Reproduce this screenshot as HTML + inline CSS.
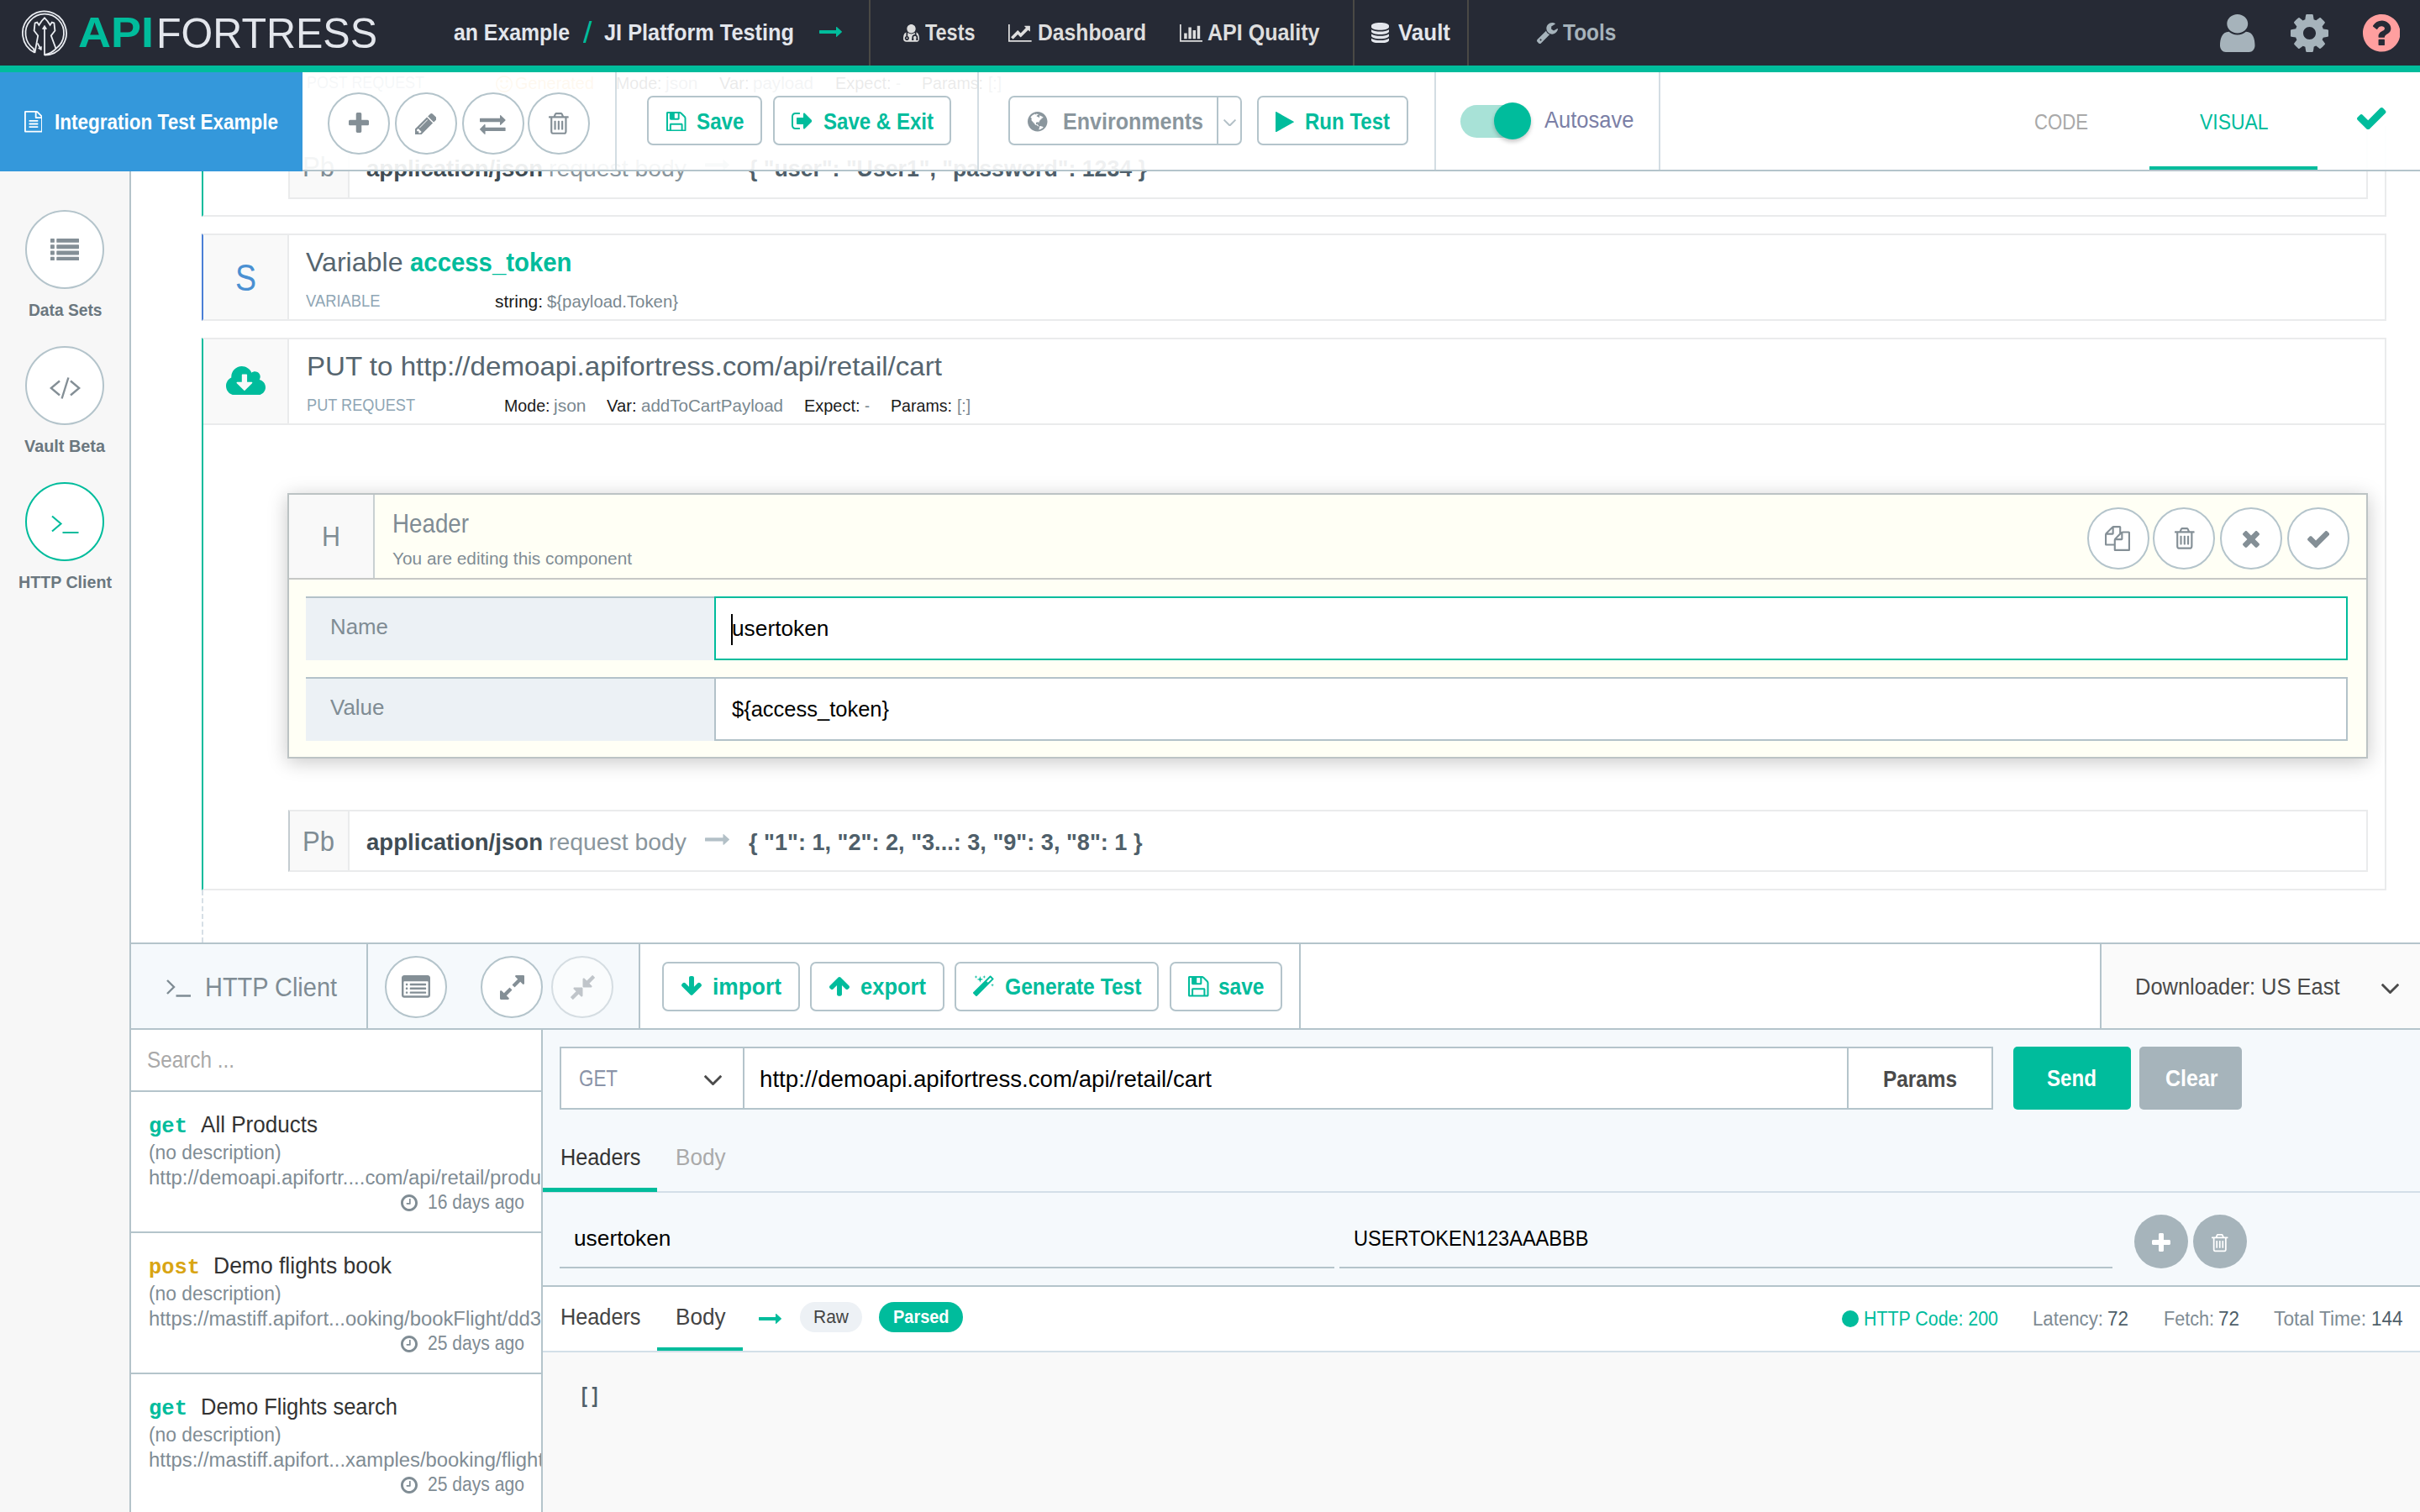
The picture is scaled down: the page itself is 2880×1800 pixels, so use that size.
<!DOCTYPE html>
<html lang="en"><head><meta charset="utf-8"><title>API Fortress - Integration Test Example</title>
<style>
*{box-sizing:border-box;margin:0;padding:0}
html,body{width:2880px;height:1800px;overflow:hidden;background:#fff}
body{position:relative;font-family:"Liberation Sans",sans-serif;-webkit-font-smoothing:antialiased}
.b{position:absolute;display:block}
.t{position:absolute;display:block;white-space:pre;transform-origin:0 0}
</style></head>
<body>
<main id="editor" class="b" style="left:156px;top:86px;width:2724px;height:1036px;background:#fff;overflow:hidden">
<span class="t" id="t0" style="left:208.5px;top:2.15px;font-size:20.5px;line-height:20.5px;color:#8fa6b5;transform:scaleX(0.8736);">POST REQUEST</span>
<svg class="b" style="left:434px;top:4px;" width="20" height="20" viewBox="0 -1408 1536 1536" preserveAspectRatio="none"><path fill="#f3b95f" transform="scale(1 -1)" d="M1134 461C1145 495 1126 530 1093 541C1059 552 1023 533 1012 499C979 392 880 320 768 320C656 320 557 392 524 499C513 533 477 552 444 541C410 530 391 495 402 461C452 300 599 192 768 192C937 192 1084 300 1134 461ZM640 896C640 967 583 1024 512 1024C441 1024 384 967 384 896C384 825 441 768 512 768C583 768 640 825 640 896ZM1152 896C1152 967 1095 1024 1024 1024C953 1024 896 967 896 896C896 825 953 768 1024 768C1095 768 1152 825 1152 896ZM1408 640C1408 287 1121 0 768 0C415 0 128 287 128 640C128 993 415 1280 768 1280C1121 1280 1408 993 1408 640ZM1536 640C1536 1064 1192 1408 768 1408C344 1408 0 1064 0 640C0 216 344 -128 768 -128C1192 -128 1536 216 1536 640Z"/></svg>
<span class="t" id="t1" style="left:457px;top:1.72px;font-size:21px;line-height:21px;color:#f0ad4e;transform:scaleX(0.9471);">Generated</span>
<span class="t" id="t2" style="left:576.5px;top:1.72px;font-size:21px;line-height:21px;color:#1a1a1a;transform:scaleX(0.9336);">Mode:</span>
<span class="t" id="t3" style="left:635.5px;top:1.72px;font-size:21px;line-height:21px;color:#7a8890;transform:scaleX(0.9992);">json</span>
<span class="t" id="t4" style="left:700px;top:1.72px;font-size:21px;line-height:21px;color:#1a1a1a;transform:scaleX(0.9603);">Var:</span>
<span class="t" id="t5" style="left:740px;top:1.72px;font-size:21px;line-height:21px;color:#7a8890;transform:scaleX(0.9788);">payload</span>
<span class="t" id="t6" style="left:838px;top:1.72px;font-size:21px;line-height:21px;color:#1a1a1a;transform:scaleX(0.9494);">Expect:</span>
<span class="t" id="t7" style="left:910px;top:1.72px;font-size:21px;line-height:21px;color:#7a8890;transform:scaleX(0.8571);">-</span>
<span class="t" id="t8" style="left:941px;top:1.72px;font-size:21px;line-height:21px;color:#1a1a1a;transform:scaleX(0.9337);">Params:</span>
<span class="t" id="t9" style="left:1020px;top:1.72px;font-size:21px;line-height:21px;color:#7a8890;transform:scaleX(0.9135);">[:]</span>
<div class="b" style="left:84px;top:64px;width:2600px;height:107.5px;border:2px solid #eaebec;border-left:2px solid #00bc9c;border-top:0"></div>
<div class="b" style="left:187px;top:64px;width:2475px;height:86.5px;border:2px solid #eaebec;border-top:0"></div>
<div class="b" style="left:189px;top:64px;width:70.5px;height:84.5px;background:#f9f9f9;border-right:2px solid #eaebec"></div>
<span class="t" id="t10" style="left:204px;top:95.02px;font-size:34px;line-height:34px;color:#7f8c94;transform:scaleX(0.9136);">Pb</span>
<span class="t" id="t11" style="left:280px;top:99.67px;font-size:28.5px;line-height:28.5px;font-weight:700;color:#3f4c54;transform:scaleX(0.9680);">application/json</span>
<span class="t" id="t12" style="left:497px;top:99.67px;font-size:28.5px;line-height:28.5px;color:#8a969d;transform:scaleX(0.9953);">request body</span>
<svg class="b" style="left:683px;top:104.3px;" width="29" height="12.88" viewBox="0 -1023.73 1728 767.405" preserveAspectRatio="none"><path fill="#b3c0c7" transform="scale(1 -1)" d="M1728 643C1728 643 1728 643 1728 643C1728 652 1724 660 1718 666L1334 1016C1324 1024 1311 1026 1299 1021C1287 1016 1280 1005 1280 992V768H32C14 768 0 754 0 736V544C0 526 14 512 32 512H1280V288C1280 275 1288 264 1299 259C1311 254 1324 256 1334 265L1718 619C1724 625 1728 634 1728 643Z"/></svg>
<span class="t" id="t13" style="left:735px;top:99.67px;font-size:28.5px;line-height:28.5px;font-weight:700;color:#4f5f6a;transform:scaleX(0.9375);">{ "user": "User1", "password": 1234 }</span>
<div class="b" style="left:84px;top:192px;width:2600px;height:104px;border:2px solid #eaebec;border-left:2px solid #4a7fd6;background:#fff"></div>
<div class="b" style="left:86px;top:194px;width:102px;height:100px;background:#f9f9f9;border-right:2px solid #eaebec"></div>
<span class="t" id="t14" style="left:123.5px;top:221.91px;font-size:45px;line-height:45px;color:#4a90d2;transform:scaleX(0.8329);">S</span>
<span class="t" id="t15" style="left:207.5px;top:210.68px;font-size:30.5px;line-height:30.5px;color:#56656f;transform:scaleX(1.0534);">Variable</span>
<span class="t" id="t16" style="left:331.5px;top:210.68px;font-size:30.5px;line-height:30.5px;font-weight:700;color:#00bc9c;transform:scaleX(0.9620);">access_token</span>
<span class="t" id="t17" style="left:207.5px;top:262.35px;font-size:20.5px;line-height:20.5px;color:#8fa6b5;transform:scaleX(0.8962);">VARIABLE</span>
<span class="t" id="t18" style="left:432.5px;top:262.22px;font-size:21px;line-height:21px;color:#1a1a1a;transform:scaleX(0.9967);">string:</span>
<span class="t" id="t19" style="left:495px;top:262.22px;font-size:21px;line-height:21px;color:#7a8890;transform:scaleX(0.9681);">${payload.Token}</span>
<div class="b" style="left:84px;top:316px;width:2600px;height:658px;border:2px solid #eaebec;border-left:2px solid #00bc9c"></div>
<div class="b" style="left:86px;top:318px;width:102px;height:101px;background:#f9f9f9;border-right:2px solid #eaebec"></div>
<div class="b" style="left:86px;top:418px;width:2596px;height:2px;background:#eaebec"></div>
<svg class="b" style="left:112.5px;top:350px;" width="47" height="34.47" viewBox="0 -1408 1920 1408" preserveAspectRatio="none"><path fill="#00bc9c" transform="scale(1 -1)" d="M1280 608C1280 599 1276 591 1270 584L919 233C913 227 904 224 896 224C887 224 879 227 873 233L521 585C515 591 512 600 512 608C512 625 526 640 544 640H768V992C768 1009 783 1024 800 1024H992C1009 1024 1024 1009 1024 992V640H1248C1266 640 1280 626 1280 608ZM1920 384C1920 562 1797 717 1623 758C1650 799 1664 847 1664 896C1664 1037 1549 1152 1408 1152C1347 1152 1288 1130 1242 1090C1163 1282 976 1408 768 1408C485 1408 256 1179 256 896C256 882 257 868 258 853C101 780 0 622 0 448C0 201 201 0 448 0H1536C1748 0 1920 172 1920 384Z"/></svg>
<span class="t" id="t20" style="left:209px;top:335.18px;font-size:30.5px;line-height:30.5px;color:#56656f;transform:scaleX(1.0860);">PUT to http://demoapi.apifortress.com/api/retail/cart</span>
<span class="t" id="t21" style="left:209px;top:386.45px;font-size:20.5px;line-height:20.5px;color:#8fa6b5;transform:scaleX(0.8871);">PUT REQUEST</span>
<span class="t" id="t22" style="left:443.5px;top:386.22px;font-size:21px;line-height:21px;color:#1a1a1a;transform:scaleX(0.9336);">Mode:</span>
<span class="t" id="t23" style="left:502.5px;top:386.22px;font-size:21px;line-height:21px;color:#7a8890;transform:scaleX(0.9992);">json</span>
<span class="t" id="t24" style="left:566px;top:386.22px;font-size:21px;line-height:21px;color:#1a1a1a;transform:scaleX(0.9603);">Var:</span>
<span class="t" id="t25" style="left:606.5px;top:386.22px;font-size:21px;line-height:21px;color:#7a8890;transform:scaleX(0.9781);">addToCartPayload</span>
<span class="t" id="t26" style="left:801px;top:386.22px;font-size:21px;line-height:21px;color:#1a1a1a;transform:scaleX(0.9494);">Expect:</span>
<span class="t" id="t27" style="left:873px;top:386.22px;font-size:21px;line-height:21px;color:#7a8890;transform:scaleX(0.8571);">-</span>
<span class="t" id="t28" style="left:904px;top:386.22px;font-size:21px;line-height:21px;color:#1a1a1a;transform:scaleX(0.9337);">Params:</span>
<span class="t" id="t29" style="left:983px;top:386.22px;font-size:21px;line-height:21px;color:#7a8890;transform:scaleX(0.9135);">[:]</span>
<div class="b" style="left:84px;top:974px;width:2px;height:62px;border-left:2px dashed #d6dfe6"></div>
<div class="b" style="left:186.3px;top:500.5px;width:2475.7px;height:316.5px;background:#fffff5;border:2px solid #bcc3c4;box-shadow:0 4px 22px rgba(0,0,0,.22)"></div>
<div class="b" style="left:188.3px;top:502.5px;width:101.7px;height:100.5px;background:#f9f9f9;border-right:2px solid #c9d0d2"></div>
<div class="b" style="left:188.3px;top:602px;width:2471.7px;height:2px;background:#c6c8c6"></div>
<span class="t" id="t30" style="left:226.5px;top:535.22px;font-size:34px;line-height:34px;color:#7f8c94;transform:scaleX(0.8957);">H</span>
<span class="t" id="t31" style="left:310.5px;top:522.18px;font-size:30.5px;line-height:30.5px;color:#7f8c94;transform:scaleX(0.9096);">Header</span>
<span class="t" id="t32" style="left:310.5px;top:568.65px;font-size:20.5px;line-height:20.5px;color:#7f8c94;transform:scaleX(1.0151);">You are editing this component</span>
<div class="b" style="left:2328px;top:518px;width:74px;height:74px;border-radius:50%;border:2px solid #b4c4cb;background:#fff;"></div>
<svg class="b" style="left:2349px;top:540.1px;" width="30" height="30" viewBox="0 -1536 1792 1792" preserveAspectRatio="none"><path fill="#848f96" transform="scale(1 -1)" d="M1696 1152H1280C1241 1152 1191 1135 1152 1112V1440C1152 1493 1109 1536 1056 1536H640C587 1536 513 1505 476 1468L68 1060C31 1023 0 949 0 896V224C0 171 43 128 96 128H640V-160C640 -213 683 -256 736 -256H1696C1749 -256 1792 -213 1792 -160V1056C1792 1109 1749 1152 1696 1152ZM1152 939V640H853ZM512 1323V1024H213ZM708 676C671 639 640 565 640 512V256H128V896H544C597 896 640 939 640 992V1408H1024V992ZM1664 -128H768V512H1184C1237 512 1280 555 1280 608V1024H1664Z"/></svg>
<div class="b" style="left:2406px;top:518px;width:74px;height:74px;border-radius:50%;border:2px solid #b4c4cb;background:#fff;"></div>
<svg class="b" style="left:2432px;top:542.33px;" width="23.6" height="25.75" viewBox="0 -1408 1408 1536" preserveAspectRatio="none"><path fill="#848f96" transform="scale(1 -1)" d="M512 800C512 818 498 832 480 832H416C398 832 384 818 384 800V224C384 206 398 192 416 192H480C498 192 512 206 512 224ZM768 800C768 818 754 832 736 832H672C654 832 640 818 640 800V224C640 206 654 192 672 192H736C754 192 768 206 768 224ZM1024 800C1024 818 1010 832 992 832H928C910 832 896 818 896 800V224C896 206 910 192 928 192H992C1010 192 1024 206 1024 224ZM1152 76C1152 28 1125 0 1120 0H288C283 0 256 28 256 76V1024H1152V76ZM480 1152 529 1269C532 1273 540 1279 546 1280H863C868 1279 877 1273 880 1269L928 1152ZM1408 1120C1408 1138 1394 1152 1376 1152H1067L997 1319C977 1368 917 1408 864 1408H544C491 1408 431 1368 411 1319L341 1152H32C14 1152 0 1138 0 1120V1056C0 1038 14 1024 32 1024H128V72C128 -38 200 -128 288 -128H1120C1208 -128 1280 -34 1280 76V1024H1376C1394 1024 1408 1038 1408 1056Z"/></svg>
<div class="b" style="left:2486px;top:518px;width:74px;height:74px;border-radius:50%;border:2px solid #b4c4cb;background:#fff;"></div>
<svg class="b" style="left:2513.2px;top:546.2px;" width="20" height="20" viewBox="110 -1170 1188 1188" preserveAspectRatio="none"><path fill="#848f96" transform="scale(1 -1)" d="M1298 214C1298 239 1288 264 1270 282L976 576L1270 870C1288 888 1298 913 1298 938C1298 963 1288 988 1270 1006L1134 1142C1116 1160 1091 1170 1066 1170C1041 1170 1016 1160 998 1142L704 848L410 1142C392 1160 367 1170 342 1170C317 1170 292 1160 274 1142L138 1006C120 988 110 963 110 938C110 913 120 888 138 870L432 576L138 282C120 264 110 239 110 214C110 189 120 164 138 146L274 10C292 -8 317 -18 342 -18C367 -18 392 -8 410 10L704 304L998 10C1016 -8 1041 -18 1066 -18C1091 -18 1116 -8 1134 10L1270 146C1288 164 1298 189 1298 214Z"/></svg>
<div class="b" style="left:2566px;top:518px;width:74px;height:74px;border-radius:50%;border:2px solid #b4c4cb;background:#fff;"></div>
<svg class="b" style="left:2589.85px;top:545.72px;" width="26.3" height="20.16" viewBox="121 -1202 1550 1188" preserveAspectRatio="none"><path fill="#848f96" transform="scale(1 -1)" d="M1671 970C1671 995 1661 1020 1643 1038L1507 1174C1489 1192 1464 1202 1439 1202C1414 1202 1389 1192 1371 1174L715 517L421 812C403 830 378 840 353 840C328 840 303 830 285 812L149 676C131 658 121 633 121 608C121 583 131 558 149 540L511 178L647 42C665 24 690 14 715 14C740 14 765 24 783 42L919 178L1643 902C1661 920 1671 945 1671 970Z"/></svg>
<div class="b" style="left:208px;top:624px;width:487px;height:75.5px;background:#ecf1f5;border-top:2px solid #b3c2c9"></div>
<span class="t" id="t33" style="left:236.5px;top:646.87px;font-size:26.5px;line-height:26.5px;color:#7f8c94;transform:scaleX(0.9759);">Name</span>
<div class="b" style="left:694.3px;top:624px;width:1944.2px;height:75.5px;background:#fff;border:2.5px solid #00bc9c"></div>
<span class="t" id="t34" style="left:714.5px;top:649.07px;font-size:26.5px;line-height:26.5px;color:#000;transform:scaleX(0.9923);">usertoken</span>
<div class="b" style="left:713.5px;top:645px;width:2px;height:37px;background:#000"></div>
<div class="b" style="left:208px;top:720px;width:487px;height:75.5px;background:#ecf1f5;border-top:2px solid #b3c2c9"></div>
<span class="t" id="t35" style="left:236.5px;top:742.87px;font-size:26.5px;line-height:26.5px;color:#7f8c94;transform:scaleX(0.9801);">Value</span>
<div class="b" style="left:694.3px;top:720px;width:1944.2px;height:75.5px;background:#fff;border:2px solid #b3c2c9"></div>
<span class="t" id="t36" style="left:714.5px;top:745.07px;font-size:26.5px;line-height:26.5px;color:#000;transform:scaleX(0.9615);">${access_token}</span>
<div class="b" style="left:187px;top:878px;width:2475px;height:74px;border:2px solid #eaebec;border-left:2px solid #c4ccd0;background:#fff"></div>
<div class="b" style="left:189px;top:880px;width:70.5px;height:70px;background:#f9f9f9;border-right:2px solid #eaebec"></div>
<span class="t" id="t37" style="left:204px;top:897.72px;font-size:34px;line-height:34px;color:#7f8c94;transform:scaleX(0.9136);">Pb</span>
<span class="t" id="t38" style="left:280px;top:902.37px;font-size:28.5px;line-height:28.5px;font-weight:700;color:#3f4c54;transform:scaleX(0.9680);">application/json</span>
<span class="t" id="t39" style="left:497px;top:902.37px;font-size:28.5px;line-height:28.5px;color:#8a969d;transform:scaleX(0.9953);">request body</span>
<svg class="b" style="left:683px;top:907px;" width="29" height="12.88" viewBox="0 -1023.73 1728 767.405" preserveAspectRatio="none"><path fill="#b3c0c7" transform="scale(1 -1)" d="M1728 643C1728 643 1728 643 1728 643C1728 652 1724 660 1718 666L1334 1016C1324 1024 1311 1026 1299 1021C1287 1016 1280 1005 1280 992V768H32C14 768 0 754 0 736V544C0 526 14 512 32 512H1280V288C1280 275 1288 264 1299 259C1311 254 1324 256 1334 265L1718 619C1724 625 1728 634 1728 643Z"/></svg>
<span class="t" id="t40" style="left:735px;top:902.37px;font-size:28.5px;line-height:28.5px;font-weight:700;color:#4f5f6a;transform:scaleX(0.9517);">{ "1": 1, "2": 2, "3...: 3, "9": 3, "8": 1 }</span>
</main>
<div id="toolbar" class="b" style="left:0px;top:86px;width:2880px;height:118px;background:rgba(255,255,255,.91);border-bottom:2px solid #b4c4cb">
<div class="b" style="left:0px;top:0px;width:360px;height:118px;background:#3498db"></div>
<svg class="b" style="left:28.5px;top:46px;" width="21.86" height="25.5" viewBox="0 -1536 1536 1792" preserveAspectRatio="none"><path fill="#fff" transform="scale(1 -1)" d="M1468 1156 1156 1468C1119 1505 1045 1536 992 1536H96C43 1536 0 1493 0 1440V-160C0 -213 43 -256 96 -256H1440C1493 -256 1536 -213 1536 -160V992C1536 1045 1505 1119 1468 1156ZM1024 1400C1041 1394 1058 1385 1065 1378L1378 1065C1385 1058 1394 1041 1400 1024H1024ZM1408 -128H128V1408H896V992C896 939 939 896 992 896H1408ZM384 736V672C384 654 398 640 416 640H1120C1138 640 1152 654 1152 672V736C1152 754 1138 768 1120 768H416C398 768 384 754 384 736ZM1120 512H416C398 512 384 498 384 480V416C384 398 398 384 416 384H1120C1138 384 1152 398 1152 416V480C1152 498 1138 512 1120 512ZM1120 256H416C398 256 384 242 384 224V160C384 142 398 128 416 128H1120C1138 128 1152 142 1152 160V224C1152 242 1138 256 1120 256Z"/></svg>
<span class="t" id="t41" style="left:65px;top:46.07px;font-size:26.5px;line-height:26.5px;font-weight:700;color:#fff;transform:scaleX(0.8494);">Integration Test Example</span>
<div class="b" style="left:390px;top:24px;width:74px;height:74px;border-radius:50%;border:2px solid #b4c4cb;background:#fff;"></div>
<svg class="b" style="left:415px;top:48.2px;" width="24" height="24" viewBox="0 -1408 1408 1408" preserveAspectRatio="none"><path fill="#848f96" transform="scale(1 -1)" d="M1408 800C1408 853 1365 896 1312 896H896V1312C896 1365 853 1408 800 1408H608C555 1408 512 1365 512 1312V896H96C43 896 0 853 0 800V608C0 555 43 512 96 512H512V96C512 43 555 0 608 0H800C853 0 896 43 896 96V512H1312C1365 512 1408 555 1408 608Z"/></svg>
<div class="b" style="left:469.9px;top:24px;width:74px;height:74px;border-radius:50%;border:2px solid #b4c4cb;background:#fff;"></div>
<svg class="b" style="left:493.7px;top:48.8px;" width="25.6" height="25.6" viewBox="0 -1387 1515 1515" preserveAspectRatio="none"><path fill="#848f96" transform="scale(1 -1)" d="M363 0H256V128H128V235L219 326L454 91ZM886 928C886 922 884 916 879 911L337 369C332 364 326 362 320 362C307 362 298 371 298 384C298 390 300 396 305 401L847 943C852 948 858 950 864 950C877 950 886 941 886 928ZM832 1120 0 288V-128H416L1248 704ZM1515 1024C1515 1058 1501 1091 1478 1115L1243 1349C1219 1373 1186 1387 1152 1387C1118 1387 1085 1373 1062 1349L896 1184L1312 768L1478 934C1501 957 1515 990 1515 1024Z"/></svg>
<div class="b" style="left:549.8px;top:24px;width:74px;height:74px;border-radius:50%;border:2px solid #b4c4cb;background:#fff;"></div>
<svg class="b" style="left:571px;top:50.93px;" width="30.6" height="22.95" viewBox="0 -1248 1792 1344" preserveAspectRatio="none"><path fill="#848f96" transform="scale(1 -1)" d="M1792 352C1792 370 1777 384 1760 384H384V576C384 594 369 608 352 608C344 608 335 605 329 599L9 279C3 273 0 265 0 256C0 248 3 240 9 234L328 -86C335 -92 343 -96 352 -96C370 -96 384 -81 384 -64V128H1760C1777 128 1792 143 1792 160ZM1792 896C1792 904 1789 913 1783 919L1464 1238C1457 1244 1449 1248 1440 1248C1422 1248 1408 1234 1408 1216V1024H32C15 1024 0 1009 0 992V800C0 783 15 768 32 768H1408V576C1408 559 1423 544 1440 544C1448 544 1457 547 1463 553L1783 873C1789 879 1792 888 1792 896Z"/></svg>
<div class="b" style="left:628px;top:24px;width:74px;height:74px;border-radius:50%;border:2px solid #b4c4cb;background:#fff;"></div>
<svg class="b" style="left:653.45px;top:48.27px;" width="23.7" height="25.85" viewBox="0 -1408 1408 1536" preserveAspectRatio="none"><path fill="#848f96" transform="scale(1 -1)" d="M512 800C512 818 498 832 480 832H416C398 832 384 818 384 800V224C384 206 398 192 416 192H480C498 192 512 206 512 224ZM768 800C768 818 754 832 736 832H672C654 832 640 818 640 800V224C640 206 654 192 672 192H736C754 192 768 206 768 224ZM1024 800C1024 818 1010 832 992 832H928C910 832 896 818 896 800V224C896 206 910 192 928 192H992C1010 192 1024 206 1024 224ZM1152 76C1152 28 1125 0 1120 0H288C283 0 256 28 256 76V1024H1152V76ZM480 1152 529 1269C532 1273 540 1279 546 1280H863C868 1279 877 1273 880 1269L928 1152ZM1408 1120C1408 1138 1394 1152 1376 1152H1067L997 1319C977 1368 917 1408 864 1408H544C491 1408 431 1368 411 1319L341 1152H32C14 1152 0 1138 0 1120V1056C0 1038 14 1024 32 1024H128V72C128 -38 200 -128 288 -128H1120C1208 -128 1280 -34 1280 76V1024H1376C1394 1024 1408 1038 1408 1056Z"/></svg>
<div class="b" style="left:732px;top:0px;width:2px;height:116px;background:#d3dde3"></div>
<div class="b" style="left:1163px;top:0px;width:2px;height:116px;background:#d3dde3"></div>
<div class="b" style="left:1706.5px;top:0px;width:2px;height:116px;background:#d3dde3"></div>
<div class="b" style="left:1974px;top:0px;width:2px;height:116px;background:#d3dde3"></div>
<div class="b" style="left:770.3px;top:28px;width:137px;height:59.3px;border:2px solid #b4c4cb;border-radius:7px;background:#fff"></div>
<svg class="b" style="left:793px;top:46.5px;" width="23.5" height="23.5" viewBox="0 -1408 1536 1536" preserveAspectRatio="none"><path fill="#00bc9c" transform="scale(1 -1)" d="M384 0V384H1152V0ZM1280 0V416C1280 469 1237 512 1184 512H352C299 512 256 469 256 416V0H128V1280H256V864C256 811 299 768 352 768H928C981 768 1024 811 1024 864V1280C1044 1280 1083 1264 1097 1250L1378 969C1391 956 1408 915 1408 896V0ZM896 928C896 911 881 896 864 896H672C655 896 640 911 640 928V1248C640 1265 655 1280 672 1280H864C881 1280 896 1265 896 1248V928ZM1536 896C1536 949 1506 1022 1468 1060L1188 1340C1150 1378 1077 1408 1024 1408H96C43 1408 0 1365 0 1312V-32C0 -85 43 -128 96 -128H1440C1493 -128 1536 -85 1536 -32Z"/></svg>
<span class="t" id="t42" style="left:828.5px;top:45.1px;font-size:28px;line-height:28px;font-weight:700;color:#00bc9c;transform:scaleX(0.8638);">Save</span>
<div class="b" style="left:920px;top:28px;width:211.5px;height:59.3px;border:2px solid #b4c4cb;border-radius:7px;background:#fff"></div>
<svg class="b" style="left:941.5px;top:48px;" width="24.5" height="20" viewBox="0 -1280 1568 1280" preserveAspectRatio="none"><path fill="#00bc9c" transform="scale(1 -1)" d="M640 96C640 133 601 128 576 128H288C200 128 128 200 128 288V992C128 1080 200 1152 288 1152H608C653 1152 640 1220 640 1248C640 1265 625 1280 608 1280H288C129 1280 0 1151 0 992V288C0 129 129 0 288 0H608C653 0 640 68 640 96ZM1568 640C1568 657 1561 673 1549 685L1005 1229C993 1241 977 1248 960 1248C925 1248 896 1219 896 1184V896H448C413 896 384 867 384 832V448C384 413 413 384 448 384H896V96C896 61 925 32 960 32C977 32 993 39 1005 51L1549 595C1561 607 1568 623 1568 640Z"/></svg>
<span class="t" id="t43" style="left:979.5px;top:45.1px;font-size:28px;line-height:28px;font-weight:700;color:#00bc9c;transform:scaleX(0.8588);">Save &amp; Exit</span>
<div class="b" style="left:1200px;top:28px;width:277.5px;height:59.3px;border:2px solid #b4c4cb;border-radius:7px;background:#fff"></div>
<div class="b" style="left:1448px;top:30px;width:2px;height:55.3px;background:#b4c4cb"></div>
<svg class="b" style="left:1223px;top:47px;" width="23.5" height="23.5" viewBox="0 -1408 1536 1536" preserveAspectRatio="none"><path fill="#8a969d" transform="scale(1 -1)" d="M768 1408C344 1408 0 1064 0 640C0 216 344 -128 768 -128C1192 -128 1536 216 1536 640C1536 1064 1192 1408 768 1408ZM1042 887C1053 894 1071 903 1085 899C1096 896 1105 892 1092 883C1086 879 1077 883 1070 881C1079 879 1092 875 1088 866C1114 851 1080 833 1063 835C1071 834 1046 819 1046 820C1037 815 1025 815 1018 806C1010 795 1021 776 1006 780C1000 767 977 774 967 760C978 748 956 731 945 746C935 742 940 731 930 725C934 719 935 713 928 709C930 710 942 700 945 699C943 694 939 690 934 690C939 677 928 663 919 655C909 647 886 639 883 637C865 620 853 595 885 588C886 588 886 555 887 554C889 542 894 507 873 520C863 525 857 553 854 564C851 576 850 576 842 588C829 573 827 584 816 591C805 597 789 595 783 601C768 590 757 593 754 610C750 602 758 590 757 587C752 577 743 579 735 585C722 595 694 578 679 585C680 585 684 581 687 579C684 567 677 574 671 570C664 565 658 555 652 550C665 525 651 501 652 474C652 454 665 419 684 408C693 403 723 401 732 405C746 411 744 422 749 434C754 447 760 453 775 454C818 456 785 421 780 403C777 390 776 375 774 363C779 361 784 362 789 362C789 366 792 371 792 374C798 364 818 361 824 373C831 361 845 352 847 338C849 324 862 309 843 309C829 309 845 281 847 276C858 256 876 248 896 258C896 250 893 228 882 226C872 224 853 245 857 256C856 252 853 249 850 247C840 259 823 265 814 277C812 280 785 321 791 323C777 317 749 327 736 334C715 345 712 374 686 370C668 367 663 360 642 368C628 373 616 383 602 390C586 399 558 408 552 428C546 444 548 463 539 478C533 488 515 508 502 508C514 508 491 538 488 541C477 554 437 589 445 609C447 612 425 620 421 621C425 611 426 600 431 591C436 581 442 572 448 562C459 544 474 522 472 500C459 496 463 515 459 523C452 536 433 536 428 550C430 551 431 551 433 552C434 569 409 583 413 595C399 606 399 627 389 641C380 654 365 660 352 669C347 672 311 718 324 721C304 716 294 763 297 775C297 775 295 775 295 776C299 788 292 850 308 851C297 850 294 877 297 882C299 886 314 871 315 869C321 872 327 880 325 887C322 895 311 902 304 908C301 910 261 936 260 935C264 942 263 949 257 954C238 939 248 968 238 971C234 972 230 975 226 979C284 1071 365 1148 461 1201C467 1202 475 1202 483 1202C501 1200 511 1185 524 1176C526 1181 522 1189 519 1194C522 1202 534 1204 541 1206C550 1207 563 1209 571 1205C565 1214 558 1222 551 1230C550 1229 547 1227 546 1225C535 1234 514 1222 504 1218C496 1214 489 1209 481 1206C476 1204 473 1204 469 1205C499 1221 530 1235 563 1246C569 1242 575 1235 584 1228C578 1233 578 1210 580 1206C591 1191 615 1201 630 1201C629 1201 674 1195 665 1206C672 1196 672 1181 681 1172C690 1181 677 1191 683 1200C685 1204 703 1209 709 1212C716 1217 704 1224 701 1226C691 1232 652 1235 671 1258C678 1266 703 1262 711 1257C722 1251 734 1240 719 1230C726 1229 759 1220 754 1207C757 1213 762 1222 770 1222C779 1221 781 1200 785 1195C799 1170 823 1220 827 1218C809 1225 843 1234 852 1231C859 1228 870 1204 857 1205C868 1195 869 1173 849 1174C835 1175 819 1194 806 1179C797 1169 793 1154 784 1145C770 1131 751 1132 734 1134C741 1133 719 1110 717 1106C711 1099 707 1091 705 1083C703 1073 705 1062 700 1052C717 1057 726 1026 719 1025C740 1028 757 1028 777 1021C791 1016 812 1010 818 995C822 1001 841 998 847 996C859 990 860 977 863 966C867 951 880 926 897 934C900 936 922 946 914 952C906 959 897 977 905 987C913 998 932 1001 937 1015C945 1038 913 1035 913 1052C913 1062 926 1065 925 1077C925 1087 910 1107 922 1114C932 1120 980 1110 989 1104C998 1098 1026 1090 1028 1081C1026 1081 1025 1081 1023 1081C1031 1074 1038 1059 1024 1055C1033 1057 1059 1047 1041 1041C1047 1044 1052 1042 1058 1046C1065 1050 1069 1057 1078 1052C1080 1051 1091 1073 1097 1072C1106 1071 1108 1058 1112 1052C1116 1043 1127 1040 1131 1031C1138 1014 1135 998 1158 992C1165 990 1184 1001 1183 986C1187 990 1189 993 1189 994C1190 980 1196 964 1213 966C1213 966 1213 947 1211 944C1205 935 1190 937 1181 932C1178 931 1154 910 1157 907C1144 922 1123 922 1106 918C1088 915 1071 913 1054 906C1046 902 1038 898 1032 891C1029 887 1024 869 1019 868C1029 870 1034 881 1042 887ZM879 10C878 15 877 25 877 26C876 42 893 53 892 68C881 71 878 82 880 94C882 111 897 123 909 134C921 145 924 168 921 182C916 206 916 231 912 255C913 249 930 251 933 243C937 250 939 259 944 266C948 272 955 274 961 279C971 285 992 308 1004 294C1014 282 989 269 1002 258C1006 266 1002 278 1010 286C1026 304 1037 284 1053 279C1070 274 1076 268 1089 257C1085 261 1105 268 1107 269C1126 273 1134 262 1147 252C1161 242 1183 235 1181 215C1191 213 1197 210 1205 207C1213 203 1224 205 1230 199C1138 102 1016 34 879 10Z"/></svg>
<span class="t" id="t44" style="left:1265px;top:45.1px;font-size:28px;line-height:28px;font-weight:700;color:#8a969d;transform:scaleX(0.8945);">Environments</span>
<svg class="b" style="left:1455.5px;top:55.63px;" width="15" height="8.75" viewBox="77 -883 998 582" preserveAspectRatio="none"><path fill="#b3c0c7" transform="scale(1 -1)" d="M1075 800C1075 808 1071 817 1065 823L1015 873C1009 879 1000 883 992 883C984 883 975 879 969 873L576 480L183 873C177 879 168 883 160 883C151 883 143 879 137 873L87 823C81 817 77 808 77 800C77 792 81 783 87 777L553 311C559 305 568 301 576 301C584 301 593 305 599 311L1065 777C1071 783 1075 792 1075 800Z"/></svg>
<div class="b" style="left:1496px;top:28px;width:180px;height:59.3px;border:2px solid #b4c4cb;border-radius:7px;background:#fff"></div>
<svg class="b" style="left:1518px;top:46.5px;" width="22" height="24.26" viewBox="0 -1416.02 1407.25 1552.03" preserveAspectRatio="none"><path fill="#00bc9c" transform="scale(1 -1)" d="M1384 609C1415 626 1415 654 1384 671L56 1409C25 1426 0 1411 0 1376V-96C0 -131 25 -146 56 -129Z"/></svg>
<span class="t" id="t45" style="left:1552.5px;top:45.1px;font-size:28px;line-height:28px;font-weight:700;color:#00bc9c;transform:scaleX(0.8581);">Run Test</span>
<div class="b" style="left:1738px;top:38.5px;width:82px;height:39.5px;background:#a8e2d7;border-radius:20px"></div>
<div class="b" style="left:1778px;top:36px;width:44px;height:44px;background:#00bc9c;border-radius:50%;box-shadow:0 3px 5px rgba(0,0,0,.22)"></div>
<span class="t" id="t46" style="left:1838px;top:42.37px;font-size:28.5px;line-height:28.5px;color:#7b7fa6;transform:scaleX(0.8961);">Autosave</span>
<span class="t" id="t47" style="left:2421px;top:45.87px;font-size:26.5px;line-height:26.5px;color:#a9a9a9;transform:scaleX(0.8357);">CODE</span>
<span class="t" id="t48" style="left:2617.5px;top:45.87px;font-size:26.5px;line-height:26.5px;color:#00bc9c;transform:scaleX(0.8646);">VISUAL</span>
<div class="b" style="left:2558px;top:112px;width:200px;height:4px;background:#00bc9c"></div>
<svg class="b" style="left:2805px;top:41.5px;" width="34.5" height="26.44" viewBox="121 -1202 1550 1188" preserveAspectRatio="none"><path fill="#00bc9c" transform="scale(1 -1)" d="M1671 970C1671 995 1661 1020 1643 1038L1507 1174C1489 1192 1464 1202 1439 1202C1414 1202 1389 1192 1371 1174L715 517L421 812C403 830 378 840 353 840C328 840 303 830 285 812L149 676C131 658 121 633 121 608C121 583 131 558 149 540L511 178L647 42C665 24 690 14 715 14C740 14 765 24 783 42L919 178L1643 902C1661 920 1671 945 1671 970Z"/></svg>
</div>
<header id="nav" class="b" style="left:0px;top:0px;width:2880px;height:86px;background:#262a35;border-bottom:8px solid #00bc9c">
<svg class="b" style="left:26px;top:12px" width="55" height="56" viewBox="0 0 55 56" fill="none" stroke="#e9ecf1" stroke-width="1.8" stroke-linejoin="miter" stroke-linecap="butt"><path d="M15.4 50.8 A26 26 0 1 1 27 53.5"/><path d="M15.2 50.6 L13.9 45.9 A22.8 22.8 0 1 1 41.2 45.4 C37.5 49.5 33 52 27 53.2"/><path d="M15.4 51 L19.2 30.4 L14.6 24.6 L15.6 15.4 L18.2 14.6 L20.4 17.8 L23.6 13 L27 9.3 L30.4 13 L33.6 17.8 L35.8 14.6 L38.4 15.4 L39.4 24.6 L34.8 30.4 L40.6 46"/><path d="M27 54 L27 21"/><path d="M24.6 22.4 L27 18.4 L29.4 22.4 Z" fill="#e9ecf1" stroke-width="1"/><path d="M18.6 39.4 L21.8 45.2"/><path d="M19.6 45.6 L23.2 47.6 L23.4 43.4 Z" fill="#e9ecf1" stroke-width="0.8"/></svg>
<span class="t" id="t49" style="left:92.5px;top:14.17px;font-size:50px;line-height:50px;font-weight:700;color:#00bc9c;transform:scaleX(1.0797);">API</span>
<span class="t" id="t50" style="left:186px;top:14.6px;font-size:49.5px;line-height:49.5px;color:#e3e6ec;transform:scaleX(0.9791);">FORTRESS</span>
<span class="t" id="t51" style="left:540px;top:25.02px;font-size:27.5px;line-height:27.5px;font-weight:700;color:#e3e6ec;transform:scaleX(0.9028);">an Example</span>
<span class="t" id="t52" style="left:694px;top:22.35px;font-size:35.5px;line-height:35.5px;color:#00bc9c;transform:scaleX(1.0633);">/</span>
<span class="t" id="t53" style="left:719px;top:25.02px;font-size:27.5px;line-height:27.5px;font-weight:700;color:#e3e6ec;transform:scaleX(0.9206);">JI Platform Testing</span>
<svg class="b" style="left:975px;top:32px;" width="27" height="11.99" viewBox="0 -1023.73 1728 767.405" preserveAspectRatio="none"><path fill="#00bc9c" transform="scale(1 -1)" d="M1728 643C1728 643 1728 643 1728 643C1728 652 1724 660 1718 666L1334 1016C1324 1024 1311 1026 1299 1021C1287 1016 1280 1005 1280 992V768H32C14 768 0 754 0 736V544C0 526 14 512 32 512H1280V288C1280 275 1288 264 1299 259C1311 254 1324 256 1334 265L1718 619C1724 625 1728 634 1728 643Z"/></svg>
<div class="b" style="left:1034px;top:0px;width:2px;height:78px;background:#4a4945"></div>
<div class="b" style="left:1609.8px;top:0px;width:2px;height:78px;background:#4a4945"></div>
<div class="b" style="left:1745.9px;top:0px;width:2px;height:78px;background:#4a4945"></div>
<svg class="b" style="left:1075px;top:28.75px;" width="19.02" height="20.75" viewBox="0 -1408 1408 1536" preserveAspectRatio="none"><path fill="#dedede" transform="scale(1 -1)" d="M384 192C384 227 355 256 320 256C285 256 256 227 256 192C256 157 285 128 320 128C355 128 384 157 384 192ZM1408 131C1408 330 1368 644 1130 696C1159 628 1152 550 1152 477C1231 432 1280 347 1280 256V167C1300 149 1312 123 1312 96C1312 43 1269 0 1216 0C1163 0 1120 43 1120 96C1120 123 1132 149 1152 167V256C1152 326 1094 384 1024 384C954 384 896 326 896 256V167C916 149 928 123 928 96C928 43 885 0 832 0C779 0 736 43 736 96C736 123 748 149 768 167V256C768 397 883 512 1024 512V576C1024 609 1021 642 999 669C915 603 811 565 704 565C597 565 493 603 409 669C387 642 384 609 384 576V373C460 346 512 273 512 192C512 86 426 0 320 0C214 0 128 86 128 192C128 273 179 346 256 373V576C256 617 262 658 278 696C40 644 0 330 0 131C0 -32 107 -128 267 -128H1141C1301 -128 1408 -32 1408 131ZM1088 1024C1088 1236 916 1408 704 1408C492 1408 320 1236 320 1024C320 812 492 640 704 640C916 640 1088 812 1088 1024Z"/></svg>
<span class="t" id="t54" style="left:1100.5px;top:25.02px;font-size:27.5px;line-height:27.5px;font-weight:700;color:#dedede;transform:scaleX(0.8523);">Tests</span>
<svg class="b" style="left:1200px;top:28.75px;" width="27.67" height="20.75" viewBox="0 -1408 2048 1536" preserveAspectRatio="none"><path fill="#dedede" transform="scale(1 -1)" d="M2048 0H128V1408H0V-128H2048ZM1920 1248C1920 1266 1906 1280 1888 1280H1453C1425 1280 1410 1246 1431 1225L1552 1104L1088 640L855 873C842 886 822 886 809 873L224 288L416 96L832 512L1065 279C1078 266 1098 266 1111 279L1744 912L1865 791C1886 770 1920 785 1920 813Z"/></svg>
<span class="t" id="t55" style="left:1234.5px;top:25.02px;font-size:27.5px;line-height:27.5px;font-weight:700;color:#dedede;transform:scaleX(0.8981);">Dashboard</span>
<svg class="b" style="left:1403.75px;top:28.75px;" width="27.67" height="20.75" viewBox="0 -1408 2048 1536" preserveAspectRatio="none"><path fill="#dedede" transform="scale(1 -1)" d="M640 640H384V128H640ZM1024 1152H768V128H1024ZM2048 0H128V1408H0V-128H2048ZM1408 896H1152V128H1408ZM1792 1280H1536V128H1792Z"/></svg>
<span class="t" id="t56" style="left:1437px;top:25.02px;font-size:27.5px;line-height:27.5px;font-weight:700;color:#dedede;transform:scaleX(0.9100);">API Quality</span>
<svg class="b" style="left:1632px;top:26.5px;" width="21" height="24.5" viewBox="0 -1536 1536 1792" preserveAspectRatio="none"><path fill="#e3e6ec" transform="scale(1 -1)" d="M768 768C467 768 165 822 0 938V768C0 627 344 512 768 512C1192 512 1536 627 1536 768V938C1371 822 1069 768 768 768ZM768 0C467 0 165 54 0 170V0C0 -141 344 -256 768 -256C1192 -256 1536 -141 1536 0V170C1371 54 1069 0 768 0ZM768 384C467 384 165 438 0 554V384C0 243 344 128 768 128C1192 128 1536 243 1536 384V554C1371 438 1069 384 768 384ZM768 1536C344 1536 0 1421 0 1280V1152C0 1011 344 896 768 896C1192 896 1536 1011 1536 1152V1280C1536 1421 1192 1536 768 1536Z"/></svg>
<span class="t" id="t57" style="left:1664px;top:25.02px;font-size:27.5px;line-height:27.5px;font-weight:700;color:#e3e6ec;transform:scaleX(0.9434);">Vault</span>
<svg class="b" style="left:1829px;top:26.5px;" width="24.97" height="25" viewBox="21 -1408 1641 1643" preserveAspectRatio="none"><path fill="#a6b3bb" transform="scale(1 -1)" d="M384 64C384 29 355 0 320 0C285 0 256 29 256 64C256 99 285 128 320 128C355 128 384 99 384 64ZM1028 484C897 536 792 641 740 772L59 91C35 67 21 34 21 0C21 -34 35 -67 59 -90L165 -198C189 -221 222 -235 256 -235C290 -235 323 -221 346 -198L1028 484ZM1662 919C1662 939 1650 954 1630 954C1610 954 1378 808 1345 789L1152 896V1120L1445 1289C1454 1295 1461 1306 1461 1317C1461 1329 1455 1338 1445 1345C1384 1386 1289 1408 1216 1408C969 1408 768 1207 768 960C768 713 969 512 1216 512C1405 512 1576 635 1639 813C1650 845 1662 886 1662 919Z"/></svg>
<span class="t" id="t58" style="left:1860px;top:25.02px;font-size:27.5px;line-height:27.5px;font-weight:700;color:#a6b3bb;transform:scaleX(0.8906);">Tools</span>
<svg class="b" style="left:2642px;top:17px;" width="41.5" height="45" viewBox="0 -1408 1280 1536" preserveAspectRatio="none"><path fill="#a6b3bb" transform="scale(1 -1)" d="M1280 137C1280 400 1215 704 953 704C872 625 762 576 640 576C518 576 408 625 327 704C65 704 0 400 0 137C0 -9 96 -128 213 -128H1067C1184 -128 1280 -9 1280 137ZM1024 1024C1024 1236 852 1408 640 1408C428 1408 256 1236 256 1024C256 812 428 640 640 640C852 640 1024 812 1024 1024Z"/></svg>
<svg class="b" style="left:2725.5px;top:17px;" width="45" height="45" viewBox="0 -1408 1536 1536" preserveAspectRatio="none"><path fill="#a6b3bb" transform="scale(1 -1)" d="M1024 640C1024 499 909 384 768 384C627 384 512 499 512 640C512 781 627 896 768 896C909 896 1024 781 1024 640ZM1536 749C1536 766 1524 782 1507 785L1324 813C1314 846 1300 879 1283 911C1317 958 1354 1002 1388 1048C1393 1055 1396 1062 1396 1071C1396 1079 1394 1087 1389 1093C1347 1152 1277 1214 1224 1263C1217 1269 1208 1273 1199 1273C1190 1273 1181 1270 1175 1264L1033 1157C1004 1172 974 1184 943 1194L915 1378C913 1395 897 1408 879 1408H657C639 1408 625 1396 621 1380C605 1320 599 1255 592 1194C561 1184 530 1171 501 1156L363 1263C355 1269 346 1273 337 1273C303 1273 168 1127 144 1094C139 1087 135 1080 135 1071C135 1062 139 1054 145 1047C182 1002 218 957 252 909C236 879 223 849 213 817L27 789C12 786 0 768 0 753V531C0 514 12 498 29 495L212 468C222 434 236 401 253 369C219 322 182 278 148 232C143 225 140 218 140 209C140 201 142 193 147 186C189 128 259 66 312 18C319 11 328 7 337 7C346 7 355 10 362 16L503 123C532 108 562 96 593 86L621 -98C623 -115 639 -128 657 -128H879C897 -128 911 -116 915 -100C931 -40 937 25 944 86C975 96 1006 109 1035 124L1173 16C1181 11 1190 7 1199 7C1233 7 1368 154 1392 186C1398 193 1401 200 1401 209C1401 218 1397 227 1391 234C1354 279 1318 323 1284 372C1300 401 1312 431 1323 463L1508 491C1524 494 1536 512 1536 527Z"/></svg>
<div class="b" style="left:2818px;top:23px;width:32px;height:34px;background:#262a35"></div>
<svg class="b" style="left:2811.5px;top:17px;" width="44.5" height="44.5" viewBox="0 -1408 1536 1536" preserveAspectRatio="none"><path fill="#ff9f9f" transform="scale(1 -1)" d="M896 160C896 142 882 128 864 128H672C654 128 640 142 640 160V352C640 370 654 384 672 384H864C882 384 896 370 896 352V160ZM1152 832C1152 680 1048 622 972 579C925 552 896 503 896 480C896 462 882 448 864 448H672C654 448 640 462 640 480V516C640 613 737 696 808 728C869 756 896 782 896 834C896 878 837 919 773 919C737 919 704 907 687 895C668 881 648 863 601 803C595 795 585 791 576 791C569 791 562 793 557 797L425 897C412 907 408 925 417 939C503 1082 625 1152 788 1152C960 1152 1152 1015 1152 832ZM1536 640C1536 1064 1192 1408 768 1408C344 1408 0 1064 0 640C0 216 344 -128 768 -128C1192 -128 1536 216 1536 640Z"/></svg>
</header>
<aside id="sidebar" class="b" style="left:0px;top:204px;width:156px;height:1596px;background:#f7f7f7;border-right:2px solid #b4c3ca">
<div class="b" style="left:29.8px;top:45.8px;width:94.4px;height:94.4px;border-radius:50%;border:2px solid #b4c4cb;background:#fff;"></div>
<svg class="b" style="left:60px;top:79.64px;" width="34" height="26.71" viewBox="0 -1408 1792 1408" preserveAspectRatio="none"><path fill="#848f96" transform="scale(1 -1)" d="M256 224C256 241 241 256 224 256H32C15 256 0 241 0 224V32C0 15 15 0 32 0H224C241 0 256 15 256 32ZM256 608C256 625 241 640 224 640H32C15 640 0 625 0 608V416C0 399 15 384 32 384H224C241 384 256 399 256 416ZM256 992C256 1009 241 1024 224 1024H32C15 1024 0 1009 0 992V800C0 783 15 768 32 768H224C241 768 256 783 256 800ZM1792 224C1792 241 1777 256 1760 256H416C399 256 384 241 384 224V32C384 15 399 0 416 0H1760C1777 0 1792 15 1792 32ZM256 1376C256 1393 241 1408 224 1408H32C15 1408 0 1393 0 1376V1184C0 1167 15 1152 32 1152H224C241 1152 256 1167 256 1184ZM1792 608C1792 625 1777 640 1760 640H416C399 640 384 625 384 608V416C384 399 399 384 416 384H1760C1777 384 1792 399 1792 416ZM1792 992C1792 1009 1777 1024 1760 1024H416C399 1024 384 1009 384 992V800C384 783 399 768 416 768H1760C1777 768 1792 783 1792 800ZM1792 1376C1792 1393 1777 1408 1760 1408H416C399 1408 384 1393 384 1376V1184C384 1167 399 1152 416 1152H1760C1777 1152 1792 1167 1792 1184Z"/></svg>
<span class="t" id="t59" style="left:33.5px;top:153.72px;font-size:21px;line-height:21px;font-weight:700;color:#6b777f;transform:scaleX(0.9141);">Data Sets</span>
<div class="b" style="left:29.8px;top:207.8px;width:94.4px;height:94.4px;border-radius:50%;border:2px solid #b4c4cb;background:#fff;"></div>
<svg class="b" style="left:59px;top:245.3px" width="37" height="26" viewBox="0 0 37 26" fill="none" stroke="#848f96" stroke-width="2.4"><path d="M12 4.5 L1.8 13 L12 21.5 M22.4 0.5 L14.6 25.5 M25 4.5 L35.2 13 L25 21.5"/></svg>
<span class="t" id="t60" style="left:28.5px;top:315.72px;font-size:21px;line-height:21px;font-weight:700;color:#6b777f;transform:scaleX(0.9454);">Vault Beta</span>
<div class="b" style="left:29.8px;top:369.8px;width:94.4px;height:94.4px;border-radius:50%;border:2px solid #00bc9c;background:#fff;"></div>
<svg class="b" style="left:60.5px;top:408.5px" width="34" height="23" viewBox="0 0 34 23" fill="none" stroke="#00bc9c" stroke-width="2.1"><path d="M1 1.5 L11.5 10.5 L1 19.5 M13.5 21 L32.5 21"/></svg>
<span class="t" id="t61" style="left:21.5px;top:477.72px;font-size:21px;line-height:21px;font-weight:700;color:#6b777f;transform:scaleX(0.9357);">HTTP Client</span>
</aside>
<section id="http-client" class="b" style="left:156px;top:1122px;width:2724px;height:678px;background:#f5f9fc;border-top:2px solid #b4c4cb">
<div class="b" style="left:0px;top:0px;width:2724px;height:102px;background:#fff;border-bottom:2px solid #b4c4cb"></div>
<div class="b" style="left:0px;top:0px;width:605px;height:100px;background:#f5f9fc"></div>
<div class="b" style="left:279.9px;top:0px;width:2px;height:100px;background:#b4c4cb"></div>
<div class="b" style="left:604px;top:0px;width:2px;height:100px;background:#b4c4cb"></div>
<div class="b" style="left:1390px;top:0px;width:2px;height:100px;background:#b4c4cb"></div>
<div class="b" style="left:2342.5px;top:0px;width:2px;height:100px;background:#b4c4cb"></div>
<div class="b" style="left:2344.5px;top:0px;width:380px;height:100px;background:#fafafa"></div>
<svg class="b" style="left:41px;top:40px" width="32" height="24" viewBox="0 0 32 24" fill="none" stroke="#7f8c94" stroke-width="2.4"><path d="M2 3 L10 11 L2 19 M12.5 21.5 L30 21.5"/></svg>
<span class="t" id="t62" style="left:88px;top:35.68px;font-size:30.5px;line-height:30.5px;color:#7f8c94;transform:scaleX(0.9485);">HTTP Client</span>
<div class="b" style="left:302.1px;top:14.1px;width:74px;height:74px;border-radius:50%;border:2px solid #b4c4cb;background:#fff;"></div>
<svg class="b" style="left:322.1px;top:37.14px;" width="34" height="26.71" viewBox="0 -1408 1792 1408" preserveAspectRatio="none"><path fill="#848f96" transform="scale(1 -1)" d="M384 352C384 369 369 384 352 384H288C271 384 256 369 256 352V288C256 271 271 256 288 256H352C369 256 384 271 384 288ZM384 608C384 625 369 640 352 640H288C271 640 256 625 256 608V544C256 527 271 512 288 512H352C369 512 384 527 384 544ZM384 864C384 881 369 896 352 896H288C271 896 256 881 256 864V800C256 783 271 768 288 768H352C369 768 384 783 384 800ZM1536 352C1536 369 1521 384 1504 384H544C527 384 512 369 512 352V288C512 271 527 256 544 256H1504C1521 256 1536 271 1536 288ZM1536 608C1536 625 1521 640 1504 640H544C527 640 512 625 512 608V544C512 527 527 512 544 512H1504C1521 512 1536 527 1536 544ZM1536 864C1536 881 1521 896 1504 896H544C527 896 512 881 512 864V800C512 783 527 768 544 768H1504C1521 768 1536 783 1536 800ZM1664 160C1664 143 1649 128 1632 128H160C143 128 128 143 128 160V992C128 1009 143 1024 160 1024H1632C1649 1024 1664 1009 1664 992V160ZM1792 1248C1792 1336 1720 1408 1632 1408H160C72 1408 0 1336 0 1248V160C0 72 72 0 160 0H1632C1720 0 1792 72 1792 160Z"/></svg>
<div class="b" style="left:416.1px;top:14.1px;width:74px;height:74px;border-radius:50%;border:2px solid #b4c4cb;background:#fff;"></div>
<svg class="b" style="left:438.5px;top:36.5px;" width="29" height="29" viewBox="0 -1408 1536 1536" preserveAspectRatio="none"><path fill="#848f96" transform="scale(1 -1)" d="M755 480C755 488 751 497 745 503L631 617C625 623 616 627 608 627C600 627 591 623 585 617L253 285L109 429C97 441 81 448 64 448C29 448 0 419 0 384V-64C0 -99 29 -128 64 -128H512C547 -128 576 -99 576 -64C576 -47 569 -31 557 -19L413 125L745 457C751 463 755 472 755 480ZM1536 1344C1536 1379 1507 1408 1472 1408H1024C989 1408 960 1379 960 1344C960 1327 967 1311 979 1299L1123 1155L791 823C785 817 781 808 781 800C781 792 785 783 791 777L905 663C911 657 920 653 928 653C936 653 945 657 951 663L1283 995L1427 851C1439 839 1455 832 1472 832C1507 832 1536 861 1536 896Z"/></svg>
<div class="b" style="left:500px;top:14.1px;width:74px;height:74px;border-radius:50%;border:2px solid #d5dde2;background:#fafcfd;"></div>
<svg class="b" style="left:522.5px;top:36.5px;" width="29" height="29" viewBox="13 -1395 1510 1510" preserveAspectRatio="none"><path fill="#c0c5ca" transform="scale(1 -1)" d="M768 576C768 611 739 640 704 640H256C221 640 192 611 192 576C192 559 199 543 211 531L355 387L23 55C17 49 13 40 13 32C13 24 17 15 23 9L137 -105C143 -111 152 -115 160 -115C168 -115 177 -111 183 -105L515 227L659 83C671 71 687 64 704 64C739 64 768 93 768 128ZM1523 1248C1523 1256 1519 1265 1513 1271L1399 1385C1393 1391 1384 1395 1376 1395C1368 1395 1359 1391 1353 1385L1021 1053L877 1197C865 1209 849 1216 832 1216C797 1216 768 1187 768 1152V704C768 669 797 640 832 640H1280C1315 640 1344 669 1344 704C1344 721 1337 737 1325 749L1181 893L1513 1225C1519 1231 1523 1240 1523 1248Z"/></svg>
<div class="b" style="left:632px;top:20.5px;width:163.5px;height:59px;border:2px solid #b4c4cb;border-radius:7px;background:#fff"></div>
<svg class="b" style="left:655px;top:38px;" width="24" height="22.84" viewBox="53 -1408 1558 1483" preserveAspectRatio="none"><path fill="#00bc9c" transform="scale(1 -1)" d="M1611 704C1611 738 1597 771 1574 795L1499 870C1475 893 1442 907 1408 907C1374 907 1341 893 1318 870L1024 576V1280C1024 1350 966 1408 896 1408H768C698 1408 640 1350 640 1280V576L346 870C323 893 290 907 256 907C222 907 189 893 165 870L91 795C67 771 53 738 53 704C53 670 67 637 91 614L742 -38C765 -61 798 -75 832 -75C866 -75 899 -61 923 -38L1574 614C1597 637 1611 670 1611 704Z"/></svg>
<span class="t" id="t63" style="left:692px;top:36.8px;font-size:28px;line-height:28px;font-weight:700;color:#00bc9c;transform:scaleX(0.9413);">import</span>
<div class="b" style="left:808px;top:20.5px;width:159.5px;height:59px;border:2px solid #b4c4cb;border-radius:7px;background:#fff"></div>
<svg class="b" style="left:830.5px;top:39px;" width="24" height="22.68" viewBox="53 -1344 1558 1472" preserveAspectRatio="none"><path fill="#00bc9c" transform="scale(1 -1)" d="M1611 565C1611 599 1597 632 1574 656L923 1307C899 1331 866 1344 832 1344C798 1344 765 1331 742 1307L91 656C67 632 53 599 53 565C53 531 67 499 91 475L166 400C189 376 222 362 256 362C290 362 323 376 346 400L640 693V-11C640 -83 700 -128 768 -128H896C964 -128 1024 -83 1024 -11V693L1318 400C1341 376 1374 362 1408 362C1442 362 1475 376 1499 400L1574 475C1597 499 1611 531 1611 565Z"/></svg>
<span class="t" id="t64" style="left:868px;top:36.8px;font-size:28px;line-height:28px;font-weight:700;color:#00bc9c;transform:scaleX(0.9114);">export</span>
<div class="b" style="left:980px;top:20.5px;width:243px;height:59px;border:2px solid #b4c4cb;border-radius:7px;background:#fff"></div>
<svg class="b" style="left:1002px;top:36.5px;" width="25" height="25" viewBox="27 -1536 1637 1637" preserveAspectRatio="none"><path fill="#00bc9c" transform="scale(1 -1)" d="M1190 955 1083 1062 1376 1355 1483 1248ZM1637 1248C1637 1265 1631 1281 1619 1293L1421 1491C1409 1503 1393 1509 1376 1509C1359 1509 1343 1503 1331 1491L45 205C33 193 27 177 27 160C27 143 33 127 45 115L243 -83C255 -95 271 -101 288 -101C305 -101 321 -95 333 -83L1619 1203C1631 1215 1637 1231 1637 1248ZM286 1438 256 1536 226 1438 128 1408 226 1378 256 1280 286 1378 384 1408ZM636 1276 576 1472 516 1276 320 1216 516 1156 576 960 636 1156 832 1216ZM1566 798 1536 896 1506 798 1408 768 1506 738 1536 640 1566 738 1664 768ZM926 1438 896 1536 866 1438 768 1408 866 1378 896 1280 926 1378 1024 1408Z"/></svg>
<span class="t" id="t65" style="left:1040px;top:36.8px;font-size:28px;line-height:28px;font-weight:700;color:#00bc9c;transform:scaleX(0.8799);">Generate Test</span>
<div class="b" style="left:1236px;top:20.5px;width:134px;height:59px;border:2px solid #b4c4cb;border-radius:7px;background:#fff"></div>
<svg class="b" style="left:1258px;top:38px;" width="24.5" height="24.5" viewBox="0 -1408 1536 1536" preserveAspectRatio="none"><path fill="#00bc9c" transform="scale(1 -1)" d="M384 0V384H1152V0ZM1280 0V416C1280 469 1237 512 1184 512H352C299 512 256 469 256 416V0H128V1280H256V864C256 811 299 768 352 768H928C981 768 1024 811 1024 864V1280C1044 1280 1083 1264 1097 1250L1378 969C1391 956 1408 915 1408 896V0ZM896 928C896 911 881 896 864 896H672C655 896 640 911 640 928V1248C640 1265 655 1280 672 1280H864C881 1280 896 1265 896 1248V928ZM1536 896C1536 949 1506 1022 1468 1060L1188 1340C1150 1378 1077 1408 1024 1408H96C43 1408 0 1365 0 1312V-32C0 -85 43 -128 96 -128H1440C1493 -128 1536 -85 1536 -32Z"/></svg>
<span class="t" id="t66" style="left:1294px;top:36.8px;font-size:28px;line-height:28px;font-weight:700;color:#00bc9c;transform:scaleX(0.8748);">save</span>
<span class="t" id="t67" style="left:2384.5px;top:36.92px;font-size:27.5px;line-height:27.5px;color:#4a4a4a;transform:scaleX(0.9262);">Downloader: US East</span>
<svg class="b" style="left:2677.5px;top:46.88px;" width="21" height="12.25" viewBox="77 -883 998 582" preserveAspectRatio="none"><path fill="#4a4a4a" transform="scale(1 -1)" d="M1075 800C1075 808 1071 817 1065 823L1015 873C1009 879 1000 883 992 883C984 883 975 879 969 873L576 480L183 873C177 879 168 883 160 883C151 883 143 879 137 873L87 823C81 817 77 808 77 800C77 792 81 783 87 777L553 311C559 305 568 301 576 301C584 301 593 305 599 311L1065 777C1071 783 1075 792 1075 800Z"/></svg>
<div class="b" style="left:0px;top:102px;width:490px;height:574px;background:#fff;border-right:2px solid #b4c4cb"></div>
<span class="t" id="t68" style="left:19px;top:123.37px;font-size:28.5px;line-height:28.5px;color:#a9a9a9;transform:scaleX(0.8526);">Search ...</span>
<div class="b" style="left:0px;top:173.5px;width:488px;height:2px;background:#b4c4cb"></div>
<span class="t" id="t69" style="left:20.5px;top:204.75px;font-size:25.5px;line-height:25.5px;font-weight:700;font-family:'Liberation Mono',monospace;color:#00bc9c;transform:scaleX(1.0017);">get</span>
<span class="t" id="t70" style="left:83px;top:200.37px;font-size:28.5px;line-height:28.5px;color:#333;transform:scaleX(0.9141);">All Products</span>
<span class="t" id="t71" style="left:20.5px;top:237.33px;font-size:23px;line-height:23px;color:#7f8c94;transform:scaleX(0.9935);">(no description)</span>
<span class="t" id="t72" style="left:20.5px;top:267.03px;font-size:23px;line-height:23px;color:#7f8c94;transform:scaleX(1.0377);">http://demoapi.apifortr....com/api/retail/produ</span>
<svg class="b" style="left:321px;top:297.5px;" width="20" height="20" viewBox="0 -1408 1536 1536" preserveAspectRatio="none"><path fill="#7f8c94" transform="scale(1 -1)" d="M896 992C896 1010 882 1024 864 1024H800C782 1024 768 1010 768 992V640H544C526 640 512 626 512 608V544C512 526 526 512 544 512H864C882 512 896 526 896 544ZM1312 640C1312 340 1068 96 768 96C468 96 224 340 224 640C224 940 468 1184 768 1184C1068 1184 1312 940 1312 640ZM1536 640C1536 1064 1192 1408 768 1408C344 1408 0 1064 0 640C0 216 344 -128 768 -128C1192 -128 1536 216 1536 640Z"/></svg>
<span class="t" id="t73" style="left:352.5px;top:296.33px;font-size:23px;line-height:23px;color:#7f8c94;transform:scaleX(0.9176);">16 days ago</span>
<div class="b" style="left:0px;top:341.5px;width:488px;height:2px;background:#b4c4cb"></div>
<span class="t" id="t74" style="left:20.5px;top:372.75px;font-size:25.5px;line-height:25.5px;font-weight:700;font-family:'Liberation Mono',monospace;color:#d9a514;transform:scaleX(0.9964);">post</span>
<span class="t" id="t75" style="left:98px;top:368.37px;font-size:28.5px;line-height:28.5px;color:#333;transform:scaleX(0.9293);">Demo flights book</span>
<span class="t" id="t76" style="left:20.5px;top:405.33px;font-size:23px;line-height:23px;color:#7f8c94;transform:scaleX(0.9935);">(no description)</span>
<span class="t" id="t77" style="left:20.5px;top:435.03px;font-size:23px;line-height:23px;color:#7f8c94;transform:scaleX(1.0357);">https://mastiff.apifort...ooking/bookFlight/dd3</span>
<svg class="b" style="left:321px;top:465.5px;" width="20" height="20" viewBox="0 -1408 1536 1536" preserveAspectRatio="none"><path fill="#7f8c94" transform="scale(1 -1)" d="M896 992C896 1010 882 1024 864 1024H800C782 1024 768 1010 768 992V640H544C526 640 512 626 512 608V544C512 526 526 512 544 512H864C882 512 896 526 896 544ZM1312 640C1312 340 1068 96 768 96C468 96 224 340 224 640C224 940 468 1184 768 1184C1068 1184 1312 940 1312 640ZM1536 640C1536 1064 1192 1408 768 1408C344 1408 0 1064 0 640C0 216 344 -128 768 -128C1192 -128 1536 216 1536 640Z"/></svg>
<span class="t" id="t78" style="left:352.5px;top:464.33px;font-size:23px;line-height:23px;color:#7f8c94;transform:scaleX(0.9176);">25 days ago</span>
<div class="b" style="left:0px;top:509.5px;width:488px;height:2px;background:#b4c4cb"></div>
<span class="t" id="t79" style="left:20.5px;top:540.75px;font-size:25.5px;line-height:25.5px;font-weight:700;font-family:'Liberation Mono',monospace;color:#00bc9c;transform:scaleX(1.0017);">get</span>
<span class="t" id="t80" style="left:83px;top:536.37px;font-size:28.5px;line-height:28.5px;color:#333;transform:scaleX(0.8954);">Demo Flights search</span>
<span class="t" id="t81" style="left:20.5px;top:573.33px;font-size:23px;line-height:23px;color:#7f8c94;transform:scaleX(0.9935);">(no description)</span>
<span class="t" id="t82" style="left:20.5px;top:603.03px;font-size:23px;line-height:23px;color:#7f8c94;transform:scaleX(1.0366);">https://mastiff.apifort...xamples/booking/flight</span>
<svg class="b" style="left:321px;top:633.5px;" width="20" height="20" viewBox="0 -1408 1536 1536" preserveAspectRatio="none"><path fill="#7f8c94" transform="scale(1 -1)" d="M896 992C896 1010 882 1024 864 1024H800C782 1024 768 1010 768 992V640H544C526 640 512 626 512 608V544C512 526 526 512 544 512H864C882 512 896 526 896 544ZM1312 640C1312 340 1068 96 768 96C468 96 224 340 224 640C224 940 468 1184 768 1184C1068 1184 1312 940 1312 640ZM1536 640C1536 1064 1192 1408 768 1408C344 1408 0 1064 0 640C0 216 344 -128 768 -128C1192 -128 1536 216 1536 640Z"/></svg>
<span class="t" id="t83" style="left:352.5px;top:632.33px;font-size:23px;line-height:23px;color:#7f8c94;transform:scaleX(0.9176);">25 days ago</span>
<div class="b" style="left:488px;top:102px;width:2px;height:574px;background:#b4c4cb"></div>
<div class="b" style="left:510px;top:121.8px;width:1706px;height:75.7px;background:#fff;border:2px solid #b4c4cb"></div>
<div class="b" style="left:728px;top:123.8px;width:2px;height:71.7px;background:#b4c4cb"></div>
<div class="b" style="left:2042px;top:123.8px;width:2px;height:71.7px;background:#b4c4cb"></div>
<span class="t" id="t84" style="left:532.5px;top:145.37px;font-size:28.5px;line-height:28.5px;color:#8a93a8;transform:scaleX(0.7851);">GET</span>
<svg class="b" style="left:682px;top:155.88px;" width="21" height="12.25" viewBox="77 -883 998 582" preserveAspectRatio="none"><path fill="#4a4a4a" transform="scale(1 -1)" d="M1075 800C1075 808 1071 817 1065 823L1015 873C1009 879 1000 883 992 883C984 883 975 879 969 873L576 480L183 873C177 879 168 883 160 883C151 883 143 879 137 873L87 823C81 817 77 808 77 800C77 792 81 783 87 777L553 311C559 305 568 301 576 301C584 301 593 305 599 311L1065 777C1071 783 1075 792 1075 800Z"/></svg>
<span class="t" id="t85" style="left:748px;top:145.87px;font-size:28.5px;line-height:28.5px;color:#000;transform:scaleX(0.9704);">http://demoapi.apifortress.com/api/retail/cart</span>
<span class="t" id="t86" style="left:2084.5px;top:147.02px;font-size:27.5px;line-height:27.5px;font-weight:700;color:#4a4a4a;transform:scaleX(0.8854);">Params</span>
<div class="b" style="left:2240px;top:121.8px;width:140px;height:75.7px;background:#00bc9c;border-radius:5px"></div>
<span class="t" id="t87" style="left:2280px;top:145.92px;font-size:27.5px;line-height:27.5px;font-weight:700;color:#fff;transform:scaleX(0.8775);">Send</span>
<div class="b" style="left:2390px;top:121.8px;width:122px;height:75.7px;background:#a6b4bb;border-radius:5px"></div>
<span class="t" id="t88" style="left:2420.5px;top:145.92px;font-size:27.5px;line-height:27.5px;font-weight:700;color:#fff;transform:scaleX(0.9085);">Clear</span>
<span class="t" id="t89" style="left:511px;top:239.37px;font-size:28.5px;line-height:28.5px;color:#333;transform:scaleX(0.8864);">Headers</span>
<span class="t" id="t90" style="left:647.5px;top:239.37px;font-size:28.5px;line-height:28.5px;color:#aaa;transform:scaleX(0.9158);">Body</span>
<div class="b" style="left:490px;top:294px;width:2234px;height:2px;background:#d3dfe8"></div>
<div class="b" style="left:490px;top:290px;width:136px;height:4.5px;background:#00bc9c"></div>
<span class="t" id="t91" style="left:527px;top:337.07px;font-size:26.5px;line-height:26.5px;color:#000;transform:scaleX(0.9923);">usertoken</span>
<div class="b" style="left:510px;top:384px;width:921.5px;height:2px;background:#b4c4cb"></div>
<span class="t" id="t92" style="left:1454.5px;top:337.07px;font-size:26.5px;line-height:26.5px;color:#000;transform:scaleX(0.8895);">USERTOKEN123AAABBB</span>
<div class="b" style="left:1438px;top:384px;width:920px;height:2px;background:#b4c4cb"></div>
<div class="b" style="left:2384px;top:322px;width:64px;height:64px;background:#a6b4bb;border-radius:50%"></div>
<svg class="b" style="left:2405px;top:344px;" width="22" height="22" viewBox="0 -1408 1408 1408" preserveAspectRatio="none"><path fill="#fff" transform="scale(1 -1)" d="M1408 800C1408 853 1365 896 1312 896H896V1312C896 1365 853 1408 800 1408H608C555 1408 512 1365 512 1312V896H96C43 896 0 853 0 800V608C0 555 43 512 96 512H512V96C512 43 555 0 608 0H800C853 0 896 43 896 96V512H1312C1365 512 1408 555 1408 608Z"/></svg>
<div class="b" style="left:2454px;top:322px;width:64px;height:64px;background:#a6b4bb;border-radius:50%"></div>
<svg class="b" style="left:2476.25px;top:345.36px;" width="19.5" height="21.27" viewBox="0 -1408 1408 1536" preserveAspectRatio="none"><path fill="#fff" transform="scale(1 -1)" d="M512 800C512 818 498 832 480 832H416C398 832 384 818 384 800V224C384 206 398 192 416 192H480C498 192 512 206 512 224ZM768 800C768 818 754 832 736 832H672C654 832 640 818 640 800V224C640 206 654 192 672 192H736C754 192 768 206 768 224ZM1024 800C1024 818 1010 832 992 832H928C910 832 896 818 896 800V224C896 206 910 192 928 192H992C1010 192 1024 206 1024 224ZM1152 76C1152 28 1125 0 1120 0H288C283 0 256 28 256 76V1024H1152V76ZM480 1152 529 1269C532 1273 540 1279 546 1280H863C868 1279 877 1273 880 1269L928 1152ZM1408 1120C1408 1138 1394 1152 1376 1152H1067L997 1319C977 1368 917 1408 864 1408H544C491 1408 431 1368 411 1319L341 1152H32C14 1152 0 1138 0 1120V1056C0 1038 14 1024 32 1024H128V72C128 -38 200 -128 288 -128H1120C1208 -128 1280 -34 1280 76V1024H1376C1394 1024 1408 1038 1408 1056Z"/></svg>
<div class="b" style="left:490px;top:406px;width:2234px;height:80px;background:#fff;border-top:2px solid #b4c4cb;border-bottom:2px solid #d3dfe8"></div>
<span class="t" id="t93" style="left:511px;top:429.37px;font-size:28.5px;line-height:28.5px;color:#444;transform:scaleX(0.8864);">Headers</span>
<span class="t" id="t94" style="left:647.5px;top:429.37px;font-size:28.5px;line-height:28.5px;color:#444;transform:scaleX(0.9158);">Body</span>
<div class="b" style="left:626px;top:479.5px;width:102px;height:4.5px;background:#00bc9c"></div>
<svg class="b" style="left:747px;top:440px;" width="27" height="11.99" viewBox="0 -1023.73 1728 767.405" preserveAspectRatio="none"><path fill="#00bc9c" transform="scale(1 -1)" d="M1728 643C1728 643 1728 643 1728 643C1728 652 1724 660 1718 666L1334 1016C1324 1024 1311 1026 1299 1021C1287 1016 1280 1005 1280 992V768H32C14 768 0 754 0 736V544C0 526 14 512 32 512H1280V288C1280 275 1288 264 1299 259C1311 254 1324 256 1334 265L1718 619C1724 625 1728 634 1728 643Z"/></svg>
<div class="b" style="left:796px;top:426px;width:74px;height:36px;background:#edf1f5;border-radius:18px"></div>
<span class="t" id="t95" style="left:812px;top:432.95px;font-size:22.5px;line-height:22.5px;color:#444;transform:scaleX(0.9330);">Raw</span>
<div class="b" style="left:890px;top:426px;width:100px;height:36px;background:#00bc9c;border-radius:18px"></div>
<span class="t" id="t96" style="left:907px;top:432.95px;font-size:22.5px;line-height:22.5px;font-weight:700;color:#fff;transform:scaleX(0.8859);">Parsed</span>
<div class="b" style="left:2036px;top:435.5px;width:20px;height:20px;background:#00bc9c;border-radius:50%"></div>
<span class="t" id="t97" style="left:2062px;top:435.11px;font-size:23.5px;line-height:23.5px;color:#00bc9c;transform:scaleX(0.9096);">HTTP Code: 200</span>
<span class="t" id="t98" style="left:2263px;top:435.11px;font-size:23.5px;line-height:23.5px;color:#7f8c94;transform:scaleX(0.9455);">Latency:</span>
<span class="t" id="t99" style="left:2352px;top:435.11px;font-size:23.5px;line-height:23.5px;color:#4f5f6a;transform:scaleX(0.9564);">72</span>
<span class="t" id="t100" style="left:2418.5px;top:435.11px;font-size:23.5px;line-height:23.5px;color:#7f8c94;transform:scaleX(0.9187);">Fetch:</span>
<span class="t" id="t101" style="left:2484px;top:435.11px;font-size:23.5px;line-height:23.5px;color:#4f5f6a;transform:scaleX(0.9564);">72</span>
<span class="t" id="t102" style="left:2550px;top:435.11px;font-size:23.5px;line-height:23.5px;color:#7f8c94;transform:scaleX(0.9681);">Total Time:</span>
<span class="t" id="t103" style="left:2666px;top:435.11px;font-size:23.5px;line-height:23.5px;color:#4f5f6a;transform:scaleX(0.9562);">144</span>
<div class="b" style="left:490px;top:486px;width:2234px;height:190px;background:#f9f9f9"></div>
<span class="t" id="t104" style="left:535.5px;top:524.84px;font-size:25px;line-height:25px;font-weight:700;color:#4f5f6a;transform:scaleX(0.8259);">[ ]</span>
</section>
</body></html>
